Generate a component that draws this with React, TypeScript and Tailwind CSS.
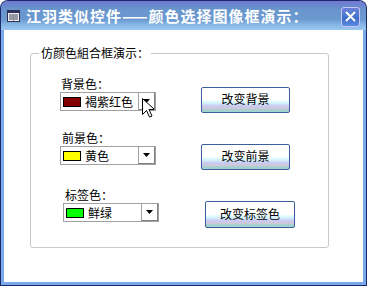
import React from 'react'

const font = { fontFamily: '"Noto Sans CJK SC", "Liberation Sans", sans-serif' }

function Combo({ color, label }: { color: string; label: string }) {
  return (
    <div className="flex items-center w-[96px] h-[19px] border border-[#a0a0a0] bg-white">
      <span className={`ml-[2px] w-[18px] h-[10px] border border-black ${color}`} />
      <span className="ml-[4px] flex-1 text-[12px] leading-[12px] text-black">{label}</span>
      <span className="flex items-center justify-center w-[17px] h-[17px] border-l border-l-[#a0a0a0] border-r border-b border-r-[#808080] border-b-[#808080] bg-white">
        <svg width="7" height="4" viewBox="0 0 7 4">
          <path d="M0 0h7L3.5 4z" fill="#000" />
        </svg>
      </span>
    </div>
  )
}

function Btn({ text, w }: { text: string; w: string }) {
  return (
    <button
      className={`${w} flex items-center justify-center rounded-[2px] border border-[#3b5e9c] text-[12px] leading-[12px] text-black bg-[linear-gradient(to_bottom,#ffffff_0%,#ffffff_50%,#e0fcff_55%,#d4ecf8_65%,#c8c8f4_75%,#d4c8d8_85%,#a4d0d0_90%,#a4d0d0_100%)]`}
    >
      <span className="-mt-[2px]">{text}</span>
    </button>
  )
}

export default function App() {
  return (
    <div style={font} className="w-[367px] h-[286px] bg-[#1a2a6a] p-px rounded-t-[8px]">
      <div className="flex flex-col h-full rounded-t-[7px] bg-[#7aa8ec] overflow-hidden">
        {/* title bar */}
        <div className="relative flex items-center h-[29px] shrink-0 bg-[linear-gradient(to_bottom,#7676d4_0%,#6a84d0_12%,#6896cc_30%,#6c9ad0_65%,#84b4e4_80%,#9cc8f0_100%)]">
          <svg className="ml-[6px] shrink-0" width="13" height="12" viewBox="0 0 13 12">
            <rect x="0.5" y="0.5" width="12" height="11" fill="#f0f0f0" stroke="#303050" />
            <rect x="1" y="1" width="11" height="2" fill="#303060" />
            <path d="M2 5h4M2 7h4M2 9h4M7 5h4M7 7h4M7 9h4" stroke="#404060" />
            <path d="M6.5 4v7" stroke="#909090" />
          </svg>
          <span className="ml-[6px] text-[15px] leading-[16px] font-bold text-white whitespace-nowrap tracking-[1px]">
            江羽类似控件——颜色选择图像框演示：
          </span>
          <div className="ml-auto mr-[6px] mt-[2px] flex items-center justify-center w-[19px] h-[20px] rounded-[3px] border border-[#c8c8f8] bg-[linear-gradient(to_bottom,#6c7ed8_0%,#4c7cd0_40%,#3c6cc8_55%,#5c8ce0_100%)]">
            <svg width="11" height="11" viewBox="0 0 11 11">
              <path d="M1 1l9 9M10 1l-9 9" stroke="#fff" strokeWidth="2" />
            </svg>
          </div>
        </div>

        {/* client area */}
        <div className="flex-1 mx-[3px] mb-[3px] bg-white">
          <div className="relative mt-[23px] ml-[26px] w-[299px] h-[195px] border border-[#c8c8c8] rounded-[3px]">
            <span className="absolute -top-[8px] left-[8px] px-[2px] bg-white text-[12px] leading-[14px] text-black">
              仿颜色組合框演示：
            </span>

            {/* row 1 */}
            <div className="flex mt-[24px]">
              <div className="ml-[29px] w-[141px]">
                <div className="ml-px text-[12px] leading-[12px] text-black">背景色：</div>
                <div className="mt-[2px] relative">
                  <Combo color="bg-[#800000]" label="褐紫红色" />
                  <svg className="absolute left-[82px] top-[6px]" width="12" height="20" viewBox="0 0 12 20">
                    <path d="M0.5 0.5v16l4-4 3 6.5 2.5-1-3-6.5h5.5z" fill="#fff" stroke="#000" />
                  </svg>
                </div>
              </div>
              <div className="mt-[9px]">
                <Btn text="改变背景" w="w-[89px] h-[26px]" />
              </div>
            </div>

            {/* row 2 */}
            <div className="flex mt-[19px]">
              <div className="ml-[29px] w-[141px]">
                <div className="ml-[2px] text-[12px] leading-[12px] text-black">前景色：</div>
                <div className="mt-[2px]">
                  <Combo color="bg-[#ffff00]" label="黄色" />
                </div>
              </div>
              <div className="mt-[12px]">
                <Btn text="改变前景" w="w-[89px] h-[26px]" />
              </div>
            </div>

            {/* row 3 */}
            <div className="flex mt-[19px]">
              <div className="ml-[32px] w-[142px]">
                <div className="ml-[2px] text-[12px] leading-[12px] text-black">标签色：</div>
                <div className="mt-[2px]">
                  <Combo color="bg-[#00ff00]" label="鲜绿" />
                </div>
              </div>
              <div className="mt-[12px]">
                <Btn text="改变标签色" w="w-[90px] h-[27px]" />
              </div>
            </div>
          </div>
        </div>
      </div>
    </div>
  )
}
